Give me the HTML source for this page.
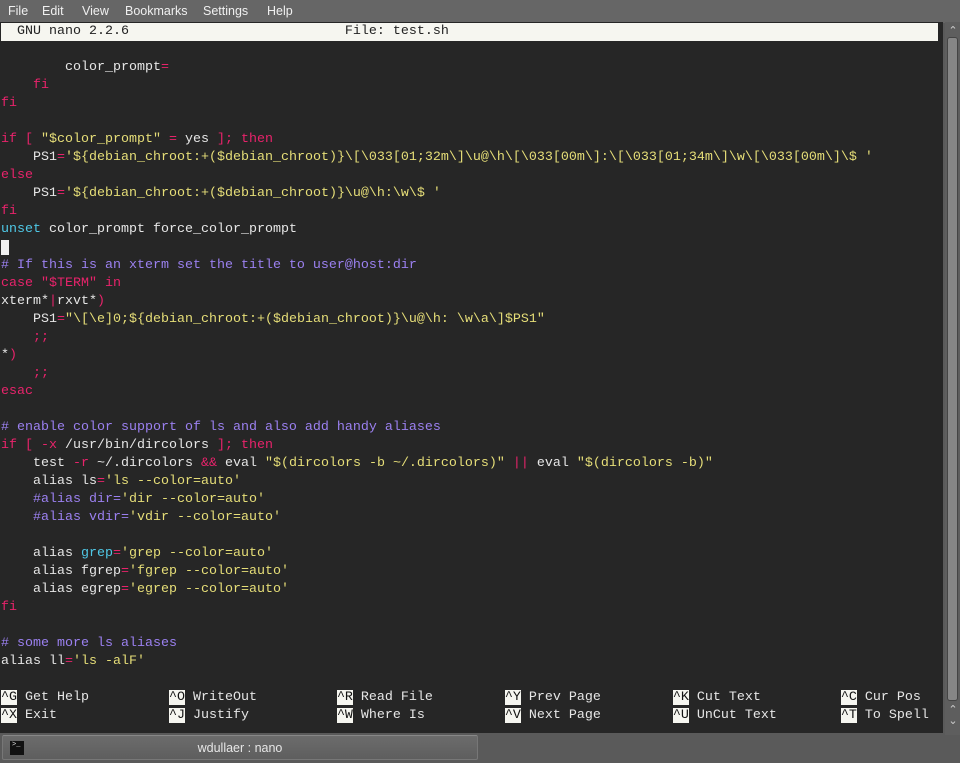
<!DOCTYPE html>
<html><head><meta charset="utf-8"><style>
*{margin:0;padding:0;box-sizing:border-box}
body{width:960px;height:763px;background:#5a5a5a;overflow:hidden;position:relative;font-family:"Liberation Sans",sans-serif}
#menu{position:absolute;left:0;top:0;width:960px;height:23px;background:#666;color:#f0f0f0;font-size:12.5px}
#menu span{position:absolute;top:4px}
#term{position:absolute;left:0;top:22px;width:943px;height:711px;background:#262626}
pre{position:absolute;left:1px;top:1px;font-family:"Liberation Mono",monospace;font-size:13.33px;line-height:18px;color:#e6e6e6;white-space:pre}
.t{display:inline-block;width:937px;background:#f6f6f0;color:#222}
.k{color:#e8236b}.c{color:#9b80f0}.s{color:#e6de78}.b{color:#4fc8e6}
.h{background:#f6f6f0;color:#111}
.cur{background:#f0f0f0}
#sb{position:absolute;left:945px;top:22px;width:15px;height:713px;background:#5e5e5e}
#thumb{position:absolute;left:947px;top:37px;width:11px;height:664px;background:#868686;border:1px solid #444;border-radius:3px}
.ar{position:absolute;left:946px;color:#ccc;font-size:11px;width:14px;text-align:center}
#tab{position:absolute;left:2px;top:735px;width:476px;height:25px;background:linear-gradient(#6c6c6c,#5e5e5e);border:1px solid #777;border-top:1px solid #888;border-radius:2px}
#tab .ic{position:absolute;left:7px;top:5px;width:14px;height:14px;background:#111;color:#ddd;font-size:7px;line-height:8px;padding-left:2px;font-family:"Liberation Mono",monospace}
#tab .tx{position:absolute;left:0;width:474px;top:5px;text-align:center;color:#e6e6e6;font-size:12.5px}
</style></head><body>
<div id="menu"><span style="left:8px">File</span><span style="left:42px">Edit</span><span style="left:82px">View</span><span style="left:125px">Bookmarks</span><span style="left:203px">Settings</span><span style="left:267px">Help</span></div>
<div id="term"><pre><span class="t">  GNU nano 2.2.6                           File: test.sh                                                                 </span>

        color_prompt<span class="k">=</span>
    <span class="k">fi</span>
<span class="k">fi</span>

<span class="k">if [</span> <span class="s">"$color_prompt"</span> <span class="k">=</span> yes <span class="k">]; then</span>
    PS1<span class="k">=</span><span class="s">'${debian_chroot:+($debian_chroot)}\[\033[01;32m\]\u@\h\[\033[00m\]:\[\033[01;34m\]\w\[\033[00m\]\$ '</span>
<span class="k">else</span>
    PS1<span class="k">=</span><span class="s">'${debian_chroot:+($debian_chroot)}\u@\h:\w\$ '</span>
<span class="k">fi</span>
<span class="b">unset</span> color_prompt force_color_prompt
<span class="cur"> </span>
<span class="c"># If this is an xterm set the title to user@host:dir</span>
<span class="k">case "$TERM" in</span>
xterm*<span class="k">|</span>rxvt*<span class="k">)</span>
    PS1<span class="k">=</span><span class="s">"\[\e]0;${debian_chroot:+($debian_chroot)}\u@\h: \w\a\]$PS1"</span>
    <span class="k">;;</span>
*<span class="k">)</span>
    <span class="k">;;</span>
<span class="k">esac</span>

<span class="c"># enable color support of ls and also add handy aliases</span>
<span class="k">if [ -x</span> /usr/bin/dircolors <span class="k">]; then</span>
    test <span class="k">-r</span> ~/.dircolors <span class="k">&amp;&amp;</span> eval <span class="s">"$(dircolors -b ~/.dircolors)"</span> <span class="k">||</span> eval <span class="s">"$(dircolors -b)"</span>
    alias ls<span class="k">=</span><span class="s">'ls --color=auto'</span>
    <span class="c">#alias dir=</span><span class="s">'dir --color=auto'</span>
    <span class="c">#alias vdir=</span><span class="s">'vdir --color=auto'</span>

    alias <span class="b">grep</span><span class="k">=</span><span class="s">'grep --color=auto'</span>
    alias fgrep<span class="k">=</span><span class="s">'fgrep --color=auto'</span>
    alias egrep<span class="k">=</span><span class="s">'egrep --color=auto'</span>
<span class="k">fi</span>

<span class="c"># some more ls aliases</span>
alias ll<span class="k">=</span><span class="s">'ls -alF'</span>

<span class="h">^G</span> Get Help          <span class="h">^O</span> WriteOut          <span class="h">^R</span> Read File         <span class="h">^Y</span> Prev Page         <span class="h">^K</span> Cut Text          <span class="h">^C</span> Cur Pos
<span class="h">^X</span> Exit              <span class="h">^J</span> Justify           <span class="h">^W</span> Where Is          <span class="h">^V</span> Next Page         <span class="h">^U</span> UnCut Text        <span class="h">^T</span> To Spell</pre></div>
<div id="sb"></div>
<div class="ar" style="top:24px">&#8963;</div>
<div id="thumb"></div>
<div class="ar" style="top:703px">&#8963;</div>
<div class="ar" style="top:714px">&#8964;</div>
<div id="tab"><div class="ic">&gt;_</div><div class="tx">wdullaer : nano</div></div>
</body></html>
